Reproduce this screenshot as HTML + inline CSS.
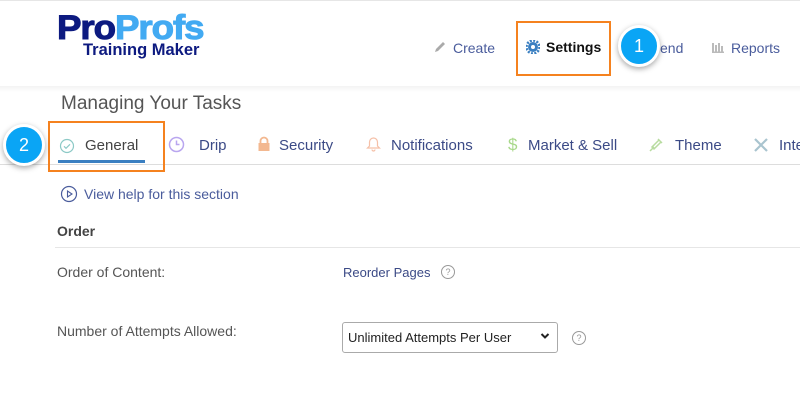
<!DOCTYPE html>
<html><head><style>
*{margin:0;padding:0;box-sizing:border-box}
body{width:800px;height:400px;background:#fff;font-family:"Liberation Sans",sans-serif;position:relative;overflow:hidden}
.a{position:absolute;white-space:nowrap}
.nav{font-size:14px;color:#4a5c9c}
.tab{font-size:15px;color:#3b4a86;top:137px}
.circ{position:absolute;width:42px;height:42px;border-radius:50%;background:#0aa5f5;border:3px solid #fff;box-shadow:0 2px 6px rgba(0,0,0,.35);color:#fff;font-size:18px;text-align:center;line-height:36px}
</style></head><body>
<div class="a" style="left:0;top:0;width:800px;height:1px;background:#e6e6e6"></div>
<div class="a" style="left:0;top:86px;width:800px;height:6px;background:linear-gradient(#f3f3f3,#fff)"></div>
<div class="a" style="left:57px;top:11px;font-size:34px;font-weight:bold;letter-spacing:-1px;line-height:34px;transform:scaleX(1.08);transform-origin:left top;-webkit-text-stroke:1px currentColor"><span style="color:#0d1a80">Pro</span><span style="color:#42aaf2">Profs</span></div>
<div class="a" style="left:83px;top:41px;font-size:16.5px;font-weight:bold;color:#0d1a80;line-height:18px">Training Maker</div>
<svg class="a" style="left:433px;top:40px" width="14" height="14" viewBox="0 0 14 14"><path d="M2 12l1-3 7-7 2 2-7 7z" fill="#aaa"/></svg>
<div class="a nav" style="left:453px;top:40px">Create</div>
<div class="a" style="left:516px;top:21px;width:95px;height:55px;border:2px solid #f5821f"></div>
<svg class="a" style="left:526px;top:40px" width="14" height="14" viewBox="0 0 14 14"><circle cx="7" cy="7" r="5" fill="#3a7fc1"/><circle cx="7" cy="7" r="6.5" fill="none" stroke="#3a7fc1" stroke-width="2.5" stroke-dasharray="2 1.4"/><circle cx="7" cy="7" r="2" fill="#fff"/></svg>
<div class="a" style="left:546px;top:39px;font-size:14px;font-weight:bold;color:#111">Settings</div>
<div class="a nav" style="left:660px;top:40px">end</div>
<div class="circ" style="left:618px;top:25px">1</div>
<svg class="a" style="left:712px;top:41px" width="12" height="12" viewBox="0 0 12 12"><path d="M1 2v9M4 4v7M7 2v9M10 5v6M0 11.5h12" stroke="#bbb" stroke-width="2"/></svg>
<div class="a nav" style="left:731px;top:40px">Reports</div>
<div class="a" style="left:61px;top:93px;font-size:19px;color:#555">Managing Your Tasks</div>
<div class="a" style="left:0;top:164px;width:800px;height:1px;background:#ddd"></div>
<div class="a" style="left:48px;top:121px;width:117px;height:51px;border:2px solid #f5821f"></div>
<div class="a" style="left:58px;top:160px;width:87px;height:3px;background:#3a7fc1"></div>
<svg class="a" style="left:59px;top:138px" width="16" height="16" viewBox="0 0 16 16"><circle cx="8" cy="8" r="6.5" fill="none" stroke="#8cc9c6" stroke-width="1.2"/><path d="M5 8.3l2 2 4-4" fill="none" stroke="#8cc9c6" stroke-width="1.2"/></svg>
<div class="a tab" style="left:85px;color:#444">General</div>
<div class="circ" style="left:3px;top:124px">2</div>
<svg class="a" style="left:168px;top:136px" width="17" height="17" viewBox="0 0 17 17"><circle cx="8.5" cy="8.5" r="7" fill="none" stroke="#b9a6ef" stroke-width="1.5"/><path d="M8.5 4.5v4h3" fill="none" stroke="#b9a6ef" stroke-width="1.5"/></svg>
<div class="a tab" style="left:199px">Drip</div>
<svg class="a" style="left:257px;top:136px" width="14" height="16" viewBox="0 0 14 16"><path d="M3.5 7V5a3.5 3.5 0 0 1 7 0v2" fill="none" stroke="#f3b890" stroke-width="1.8"/><rect x="1.5" y="7" width="11" height="8" fill="#f3b890"/></svg>
<div class="a tab" style="left:279px">Security</div>
<svg class="a" style="left:366px;top:136px" width="15" height="16" viewBox="0 0 15 16"><path d="M7.5 2a4 4 0 0 0-4 4v4l-2 2h12l-2-2V6a4 4 0 0 0-4-4zM6 13.5a1.5 1.5 0 0 0 3 0" fill="none" stroke="#f5c0a8" stroke-width="1.2"/></svg>
<div class="a tab" style="left:391px">Notifications</div>
<div class="a" style="left:508px;top:135px;font-size:17px;color:#a8d88a">$</div>
<div class="a tab" style="left:528px">Market &amp; Sell</div>
<svg class="a" style="left:648px;top:136px" width="17" height="17" viewBox="0 0 17 17"><path d="M2 15l4-4M6 13l-2-2 7-7 2 2zM10 3l4 4" fill="none" stroke="#b8dca0" stroke-width="1.5"/></svg>
<div class="a tab" style="left:675px">Theme</div>
<svg class="a" style="left:753px;top:137px" width="16" height="16" viewBox="0 0 16 16"><path d="M2 2l12 12M14 2L2 14" stroke="#a9c4cf" stroke-width="2.2"/></svg>
<div class="a tab" style="left:779px">Inte</div>
<svg class="a" style="left:60px;top:185px" width="18" height="18" viewBox="0 0 18 18"><circle cx="9" cy="9" r="7.5" fill="none" stroke="#4a5c9c" stroke-width="1.2"/><path d="M7.5 6v6l4.5-3z" fill="none" stroke="#4a5c9c" stroke-width="1.1"/></svg>
<div class="a" style="left:84px;top:186px;font-size:14px;color:#4a5c9c">View help for this section</div>
<div class="a" style="left:57px;top:223px;font-size:14px;font-weight:bold;color:#444">Order</div>
<div class="a" style="left:55px;top:247px;width:745px;height:1px;background:#e6e6e6"></div>
<div class="a" style="left:57px;top:264px;font-size:14px;color:#555">Order of Content:</div>
<div class="a" style="left:343px;top:265px;font-size:13px;color:#3b4a86">Reorder Pages</div>
<div class="a" style="left:441px;top:265px;width:14px;height:14px;border:1px solid #999;border-radius:50%;font-size:9px;color:#999;text-align:center;line-height:12px">?</div>
<div class="a" style="left:57px;top:323px;font-size:14px;color:#555">Number of Attempts Allowed:</div>
<div class="a" style="left:342px;top:322px;width:216px;height:31px;border:1px solid #aaa;border-radius:3px;font-size:13px;color:#222;padding:7px 0 0 5px">Unlimited Attempts Per User</div>
<svg class="a" style="left:540px;top:332px" width="10" height="8" viewBox="0 0 10 8"><path d="M1.5 2l3.5 3.5L8.5 2" fill="none" stroke="#222" stroke-width="2"/></svg>
<div class="a" style="left:572px;top:331px;width:14px;height:14px;border:1px solid #999;border-radius:50%;font-size:9px;color:#999;text-align:center;line-height:12px">?</div>
</body></html>
